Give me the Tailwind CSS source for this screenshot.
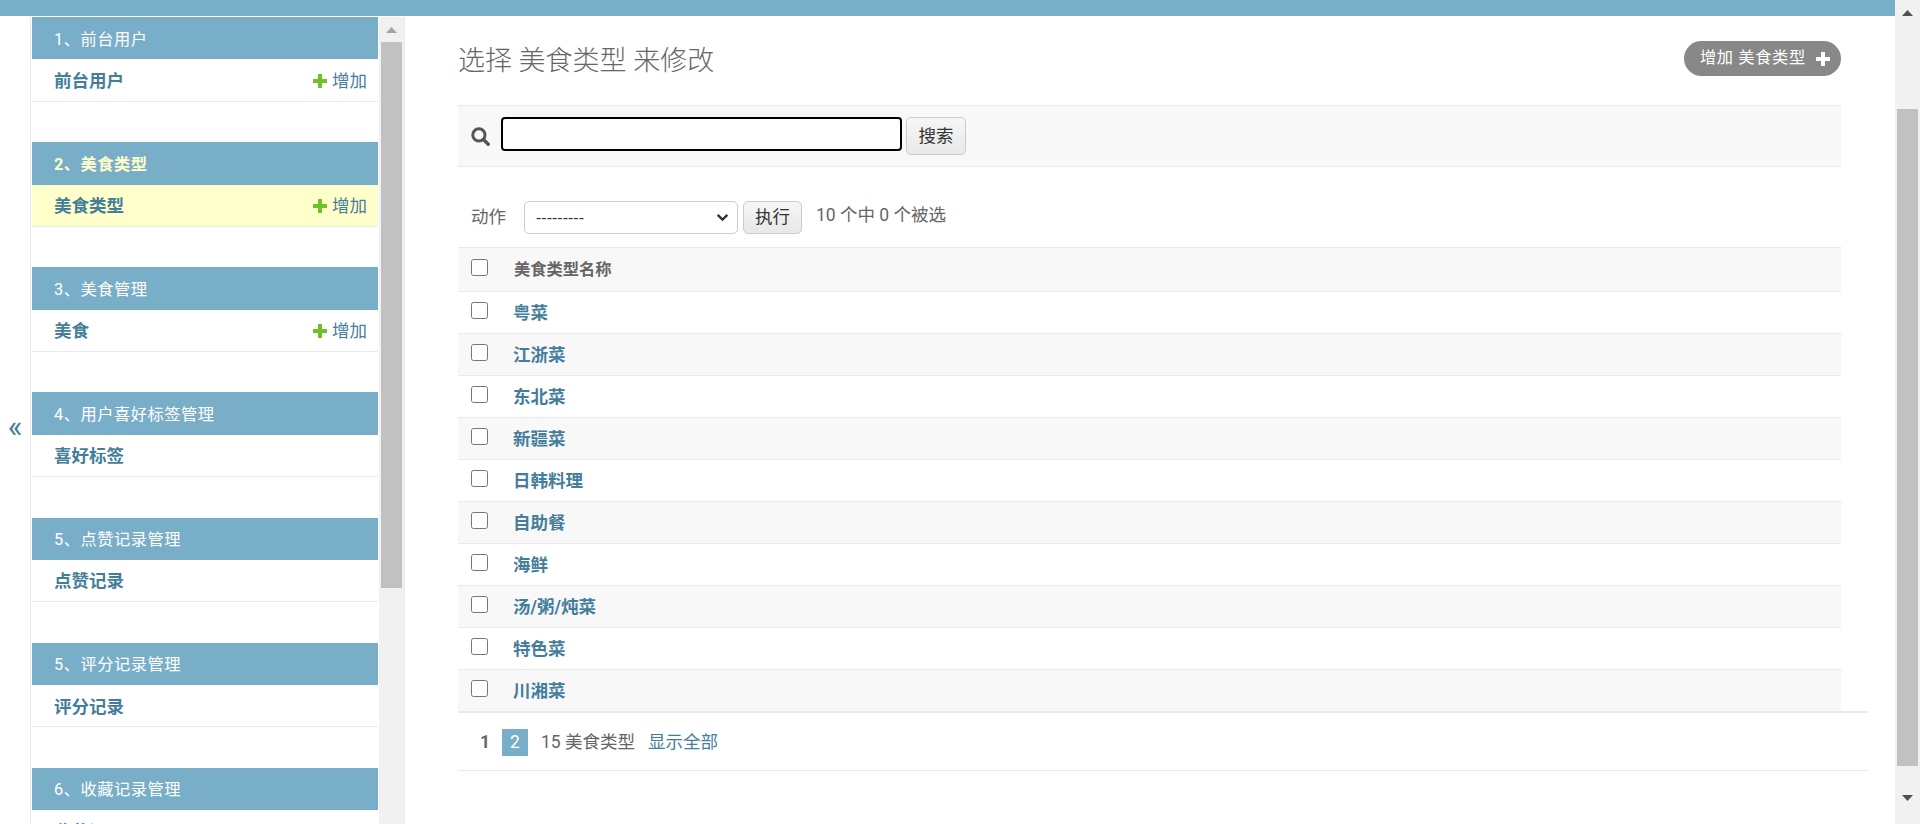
<!DOCTYPE html>
<html lang="zh">
<head>
<meta charset="utf-8">
<script src="https://cdn.jsdelivr.net/npm/@tailwindcss/browser@4"></script>
<title>美食类型</title>
</head>
<body class="h-[824px] overflow-hidden bg-white font-['Roboto','Noto_Sans_CJK_SC',sans-serif] text-[#333]">
<div class="flex h-[824px]">
  <div class="flex-1 min-w-0 flex flex-col">
    <div class="h-4 shrink-0 bg-[#79aec8]"></div>
    <div class="flex flex-1 min-h-0 pt-px">
      <button class="w-[30px] shrink-0 flex items-center justify-center text-[31px] leading-none text-[#447e9b] pt-[12px]">«</button>
      <div class="w-[375px] shrink-0 flex border-l border-r border-[#eaeaea] overflow-hidden">
        <nav class="w-[347px] shrink-0 pl-px">
          <div class="h-[125.17px]">
            <div class="h-[42.4px] bg-[#79aec8] pl-[22px] pt-[3px] flex items-center text-[16.25px] tracking-[0.5px] text-white">1、前台用户</div>
            <div class="h-[42.2px] border-b border-[#eaeaea] pl-[22px] pr-[11px] pt-[2px] flex items-center justify-between">
              <a class="text-[17.5px] font-bold text-[#447e9b]">前台用户</a>
              <a class="flex items-center gap-[5px] text-[17.5px] text-[#447e9b]"><svg class="w-[14px] h-[14px]" viewBox="0 0 14 14"><path fill="#70bf2b" d="M5 0h4v5h5v4H9v5H5V9H0V5h5z"/></svg>增加</a>
            </div>
          </div>
          <div class="h-[125.17px]">
            <div class="h-[42.4px] bg-[#79aec8] pl-[22px] pt-[3px] flex items-center text-[16.25px] tracking-[0.5px] font-bold text-[#ffc]">2、美食类型</div>
            <div class="h-[42.2px] border-b border-[#eaeaea] bg-[#ffc] pl-[22px] pr-[11px] pt-[2px] flex items-center justify-between">
              <a class="text-[17.5px] font-bold text-[#447e9b]">美食类型</a>
              <a class="flex items-center gap-[5px] text-[17.5px] text-[#447e9b]"><svg class="w-[14px] h-[14px]" viewBox="0 0 14 14"><path fill="#70bf2b" d="M5 0h4v5h5v4H9v5H5V9H0V5h5z"/></svg>增加</a>
            </div>
          </div>
          <div class="h-[125.17px]">
            <div class="h-[42.4px] bg-[#79aec8] pl-[22px] pt-[3px] flex items-center text-[16.25px] tracking-[0.5px] text-white">3、美食管理</div>
            <div class="h-[42.2px] border-b border-[#eaeaea] pl-[22px] pr-[11px] pt-[2px] flex items-center justify-between">
              <a class="text-[17.5px] font-bold text-[#447e9b]">美食</a>
              <a class="flex items-center gap-[5px] text-[17.5px] text-[#447e9b]"><svg class="w-[14px] h-[14px]" viewBox="0 0 14 14"><path fill="#70bf2b" d="M5 0h4v5h5v4H9v5H5V9H0V5h5z"/></svg>增加</a>
            </div>
          </div>
          <div class="h-[125.17px]">
            <div class="h-[42.4px] bg-[#79aec8] pl-[22px] pt-[3px] flex items-center text-[16.25px] tracking-[0.5px] text-white">4、用户喜好标签管理</div>
            <div class="h-[42.2px] border-b border-[#eaeaea] pl-[22px] pr-[11px] pt-[2px] flex items-center">
              <a class="text-[17.5px] font-bold text-[#447e9b]">喜好标签</a>
            </div>
          </div>
          <div class="h-[125.17px]">
            <div class="h-[42.4px] bg-[#79aec8] pl-[22px] pt-[3px] flex items-center text-[16.25px] tracking-[0.5px] text-white">5、点赞记录管理</div>
            <div class="h-[42.2px] border-b border-[#eaeaea] pl-[22px] pr-[11px] pt-[2px] flex items-center">
              <a class="text-[17.5px] font-bold text-[#447e9b]">点赞记录</a>
            </div>
          </div>
          <div class="h-[125.17px]">
            <div class="h-[42.4px] bg-[#79aec8] pl-[22px] pt-[3px] flex items-center text-[16.25px] tracking-[0.5px] text-white">5、评分记录管理</div>
            <div class="h-[42.2px] border-b border-[#eaeaea] pl-[22px] pr-[11px] pt-[2px] flex items-center">
              <a class="text-[17.5px] font-bold text-[#447e9b]">评分记录</a>
            </div>
          </div>
          <div class="h-[125.17px]">
            <div class="h-[42.4px] bg-[#79aec8] pl-[22px] pt-[3px] flex items-center text-[16.25px] tracking-[0.5px] text-white">6、收藏记录管理</div>
            <div class="h-[42.2px] border-b border-[#eaeaea] pl-[22px] pr-[11px] pt-[2px] flex items-center">
              <a class="text-[17.5px] font-bold text-[#447e9b]">收藏记录</a>
            </div>
          </div>
        </nav>
        <div class="w-[25px] shrink-0 ml-px bg-[#f1f1f1] px-[2px] flex flex-col">
          <div class="h-[25px] flex items-center justify-center"><svg class="w-[11px] h-[6px]" viewBox="0 0 11 6"><path fill="#a3a3a3" d="M5.5 0 11 6H0z"/></svg></div>
          <div class="h-[546px] bg-[#c1c1c1]"></div>
        </div>
      </div>
      <main class="flex-1 min-w-0 pl-[53px] pr-[27px]">
        <div class="flex items-start justify-between pr-[27px] pt-[24px] h-[88px]">
          <h1 class="mt-[3px] text-[27px] font-light leading-[34px] text-[#666]">选择 美食类型 来修改</h1>
          <a class="h-[35px] w-[157px] rounded-full bg-[#888] pl-4 pr-[11px] flex items-center justify-between text-[16.25px] tracking-[0.6px] text-white">增加 美食类型<svg class="w-[14px] h-[14px]" viewBox="0 0 14 14"><path fill="#fff" d="M5 0h4v5h5v4H9v5H5V9H0V5h5z"/></svg></a>
        </div>
        <div class="mr-[27px] h-[62px] border-y border-[#eaeaea] bg-[#f8f8f8] pl-[13px] flex items-start pt-[11px]">
          <svg class="w-[19px] h-[19px] mt-[10px]" viewBox="0 0 18 18"><circle cx="7.5" cy="7.5" r="5.8" fill="none" stroke="#555" stroke-width="2.8"/><path d="M11.8 11.8 16.3 16.3" stroke="#555" stroke-width="3.2" stroke-linecap="round"/></svg>
          <input class="ml-[11px] w-[401px] h-[34px] rounded-[4px] border-2 border-black bg-white" type="text">
          <button class="ml-1 w-[60px] h-[38px] rounded-[5px] border border-[#ccc] bg-linear-to-b from-[#f6f6f6] to-[#e8e8e8] text-[17.5px] text-[#333]">搜索</button>
        </div>
        <div class="mr-[27px] h-[80px] flex items-start pt-[34px] pl-[13px]">
          <span class="text-[17.5px] leading-[32px] text-[#666] w-[53px]">动作</span>
          <div class="w-[214px] h-[33px] rounded-[5px] border border-[#ccc] bg-white pl-[11px] pr-[8px] flex items-center justify-between font-['Liberation_Sans',sans-serif] text-[16px] text-[#333]">---------<svg class="w-[13px] h-[9px]" viewBox="0 0 12 8"><path d="M1.5 1.5 6 6l4.5-4.5" fill="none" stroke="#333" stroke-width="2.2"/></svg></div>
          <button class="ml-[5px] w-[59px] h-[33px] rounded-[5px] border border-[#ccc] bg-linear-to-b from-[#f6f6f6] to-[#e8e8e8] text-[17.5px] text-[#333]">执行</button>
          <span class="ml-[14px] text-[17.5px] leading-[29px] text-[#666]">10 个中 0 个被选</span>
        </div>
        <div class="mr-[27px] text-[17.5px]">
          <div class="h-[45px] border-y border-[#eaeaea] bg-[#f8f8f8] flex pl-[13px] pt-[11px]">
            <input class="w-[17px] h-[17px]" type="checkbox">
            <span class="ml-[26px] text-[16.25px] font-bold leading-[22px] text-[#666]">美食类型名称</span>
          </div>
          <div class="h-[42px] border-b border-[#eaeaea] flex pl-[13px] pt-[10px]"><input class="w-[17px] h-[17px]" type="checkbox"><a class="ml-[25px] leading-[22px] font-bold text-[#447e9b]">粤菜</a></div>
          <div class="h-[42px] border-b border-[#eaeaea] bg-[#f8f8f8] flex pl-[13px] pt-[10px]"><input class="w-[17px] h-[17px]" type="checkbox"><a class="ml-[25px] leading-[22px] font-bold text-[#447e9b]">江浙菜</a></div>
          <div class="h-[42px] border-b border-[#eaeaea] flex pl-[13px] pt-[10px]"><input class="w-[17px] h-[17px]" type="checkbox"><a class="ml-[25px] leading-[22px] font-bold text-[#447e9b]">东北菜</a></div>
          <div class="h-[42px] border-b border-[#eaeaea] bg-[#f8f8f8] flex pl-[13px] pt-[10px]"><input class="w-[17px] h-[17px]" type="checkbox"><a class="ml-[25px] leading-[22px] font-bold text-[#447e9b]">新疆菜</a></div>
          <div class="h-[42px] border-b border-[#eaeaea] flex pl-[13px] pt-[10px]"><input class="w-[17px] h-[17px]" type="checkbox"><a class="ml-[25px] leading-[22px] font-bold text-[#447e9b]">日韩料理</a></div>
          <div class="h-[42px] border-b border-[#eaeaea] bg-[#f8f8f8] flex pl-[13px] pt-[10px]"><input class="w-[17px] h-[17px]" type="checkbox"><a class="ml-[25px] leading-[22px] font-bold text-[#447e9b]">自助餐</a></div>
          <div class="h-[42px] border-b border-[#eaeaea] flex pl-[13px] pt-[10px]"><input class="w-[17px] h-[17px]" type="checkbox"><a class="ml-[25px] leading-[22px] font-bold text-[#447e9b]">海鲜</a></div>
          <div class="h-[42px] border-b border-[#eaeaea] bg-[#f8f8f8] flex pl-[13px] pt-[10px]"><input class="w-[17px] h-[17px]" type="checkbox"><a class="ml-[25px] leading-[22px] font-bold text-[#447e9b]">汤/粥/炖菜</a></div>
          <div class="h-[42px] border-b border-[#eaeaea] flex pl-[13px] pt-[10px]"><input class="w-[17px] h-[17px]" type="checkbox"><a class="ml-[25px] leading-[22px] font-bold text-[#447e9b]">特色菜</a></div>
          <div class="h-[41px] bg-[#f8f8f8] flex pl-[13px] pt-[10px]"><input class="w-[17px] h-[17px]" type="checkbox"><a class="ml-[25px] leading-[22px] font-bold text-[#447e9b]">川湘菜</a></div>
        </div>
        <div class="h-[60px] border-t-2 border-b border-[#eaeaea] pt-[2px] flex items-center pl-[22px] text-[17.5px] text-[#666]">
          <span class="font-bold w-[22px]">1</span>
          <a class="w-[26px] h-[27px] bg-[#79aec8] text-white flex items-center justify-center">2</a>
          <span class="ml-[13px]">15 美食类型</span>
          <a class="ml-[13px] text-[#447e9b]">显示全部</a>
        </div>
      </main>
    </div>
  </div>
  <div class="w-[25px] shrink-0 bg-[#f1f1f1] px-[2px] flex flex-col">
    <div class="h-[25px] flex items-center justify-center"><svg class="w-[11px] h-[6px]" viewBox="0 0 11 6"><path fill="#505050" d="M5.5 0 11 6H0z"/></svg></div>
    <div class="h-[84px]"></div>
    <div class="h-[657px] bg-[#c1c1c1]"></div>
    <div class="flex-1 flex items-center justify-center pt-[6px]"><svg class="w-[11px] h-[6px]" viewBox="0 0 11 6"><path fill="#505050" d="M0 0h11L5.5 6z"/></svg></div>
  </div>
</div>
</body>
</html>
